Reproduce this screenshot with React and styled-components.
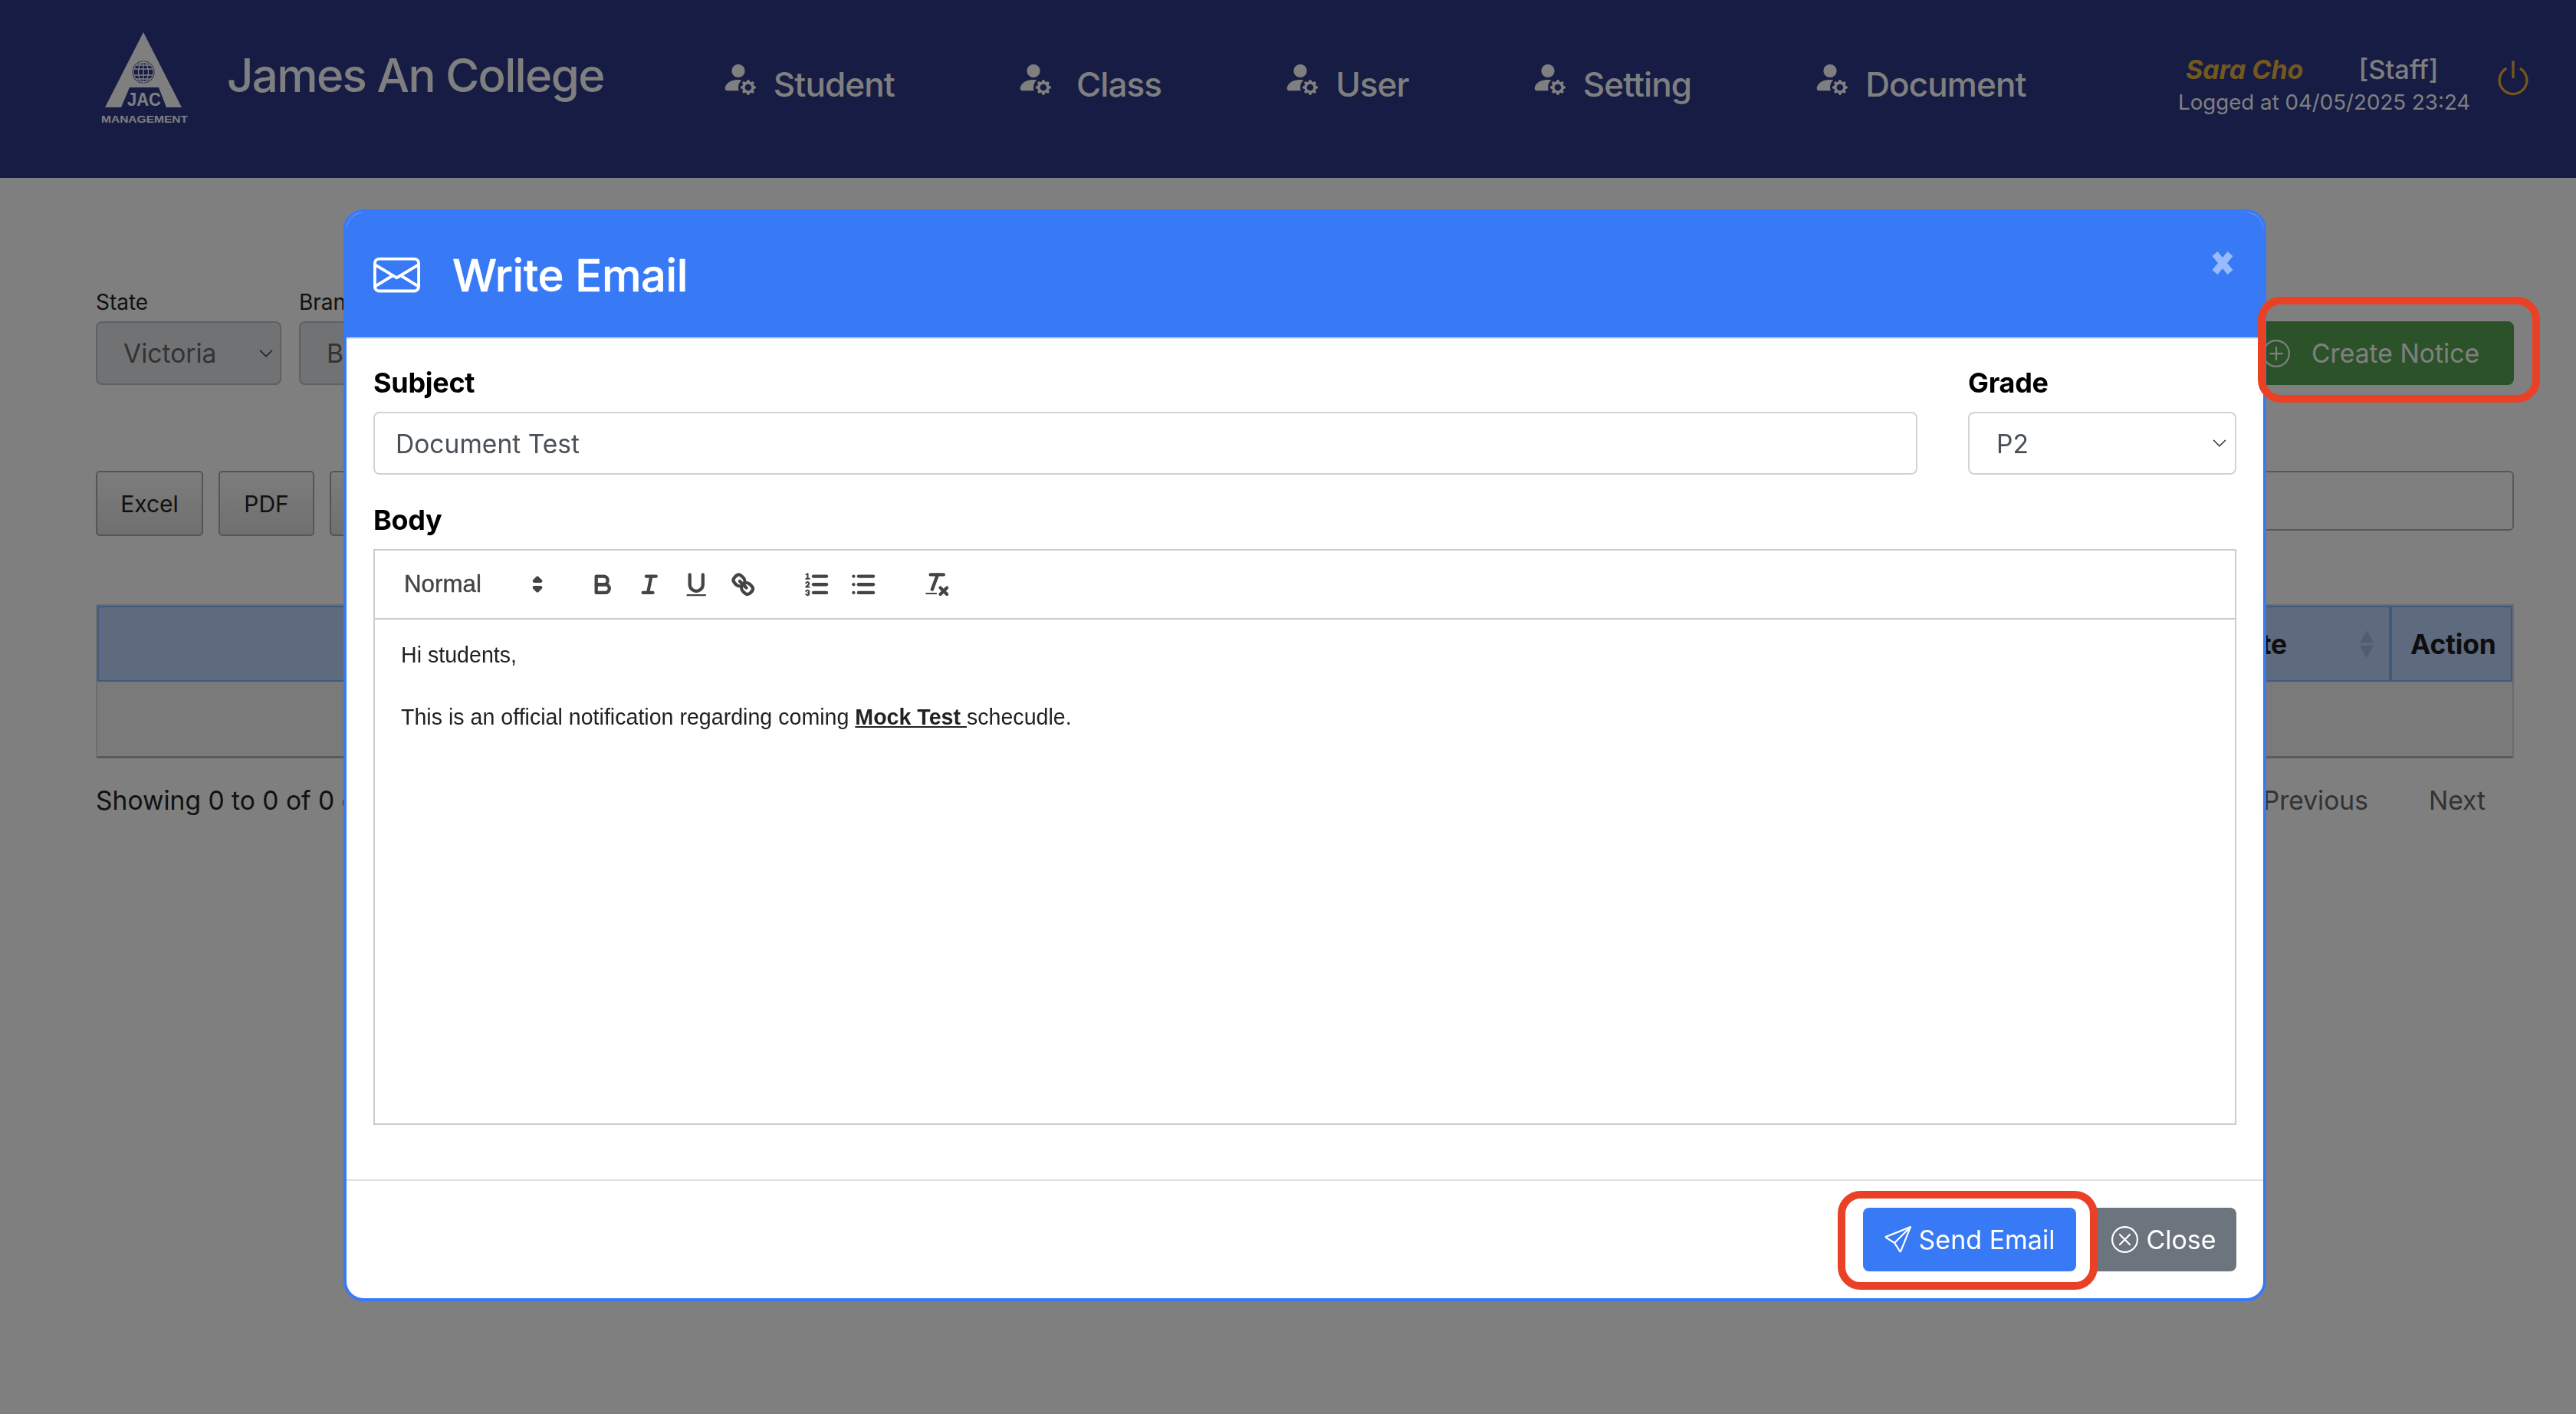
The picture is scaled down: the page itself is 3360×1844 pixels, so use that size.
import React from "react";
import styled, { createGlobalStyle } from "styled-components";
import { BsEnvelope, BsPersonFillGear, BsPower, BsPlusCircle, BsSend, BsXCircle } from "react-icons/bs";

const Global = createGlobalStyle`
  html, body { margin: 0; padding: 0; height: 1844px; overflow: hidden; background: #fff; }
  body { font-family: Inter, "Liberation Sans", sans-serif; color: #222; }
  * { box-sizing: border-box; }
`;

const TopBar = styled.header`
  height: 232px; background: #2c3889; color: #fff;
  display: flex; align-items: flex-start; padding-left: 130px; padding-right: 56px;
`;
const LogoMark = styled.svg`width: 122px; height: 128px; margin-top: 38px; flex: none;`;
const Brand = styled.div`
  font-size: 60px; line-height: 72px; font-weight: 500; letter-spacing: -1.65px;
  margin-left: 44px; margin-top: 62px; white-space: nowrap;
`;
const Nav = styled.nav`display: flex; gap: 158px; margin-left: 152px; margin-top: 80px;`;
const NavItem = styled.div`
  display: flex; align-items: flex-start; gap: ${p => p.$gap}px;
  font-size: 44px; line-height: 60px; font-weight: 500; letter-spacing: -.9px;
  svg { width: 46px; height: 46px; margin-top: -2px; }
`;
const UserBox = styled.div`margin-left: auto; margin-top: 69px; width: 380px; margin-right: 31px; flex: none;`;
const UserTop = styled.div`
  display: flex; gap: 72px; padding-left: 10px; font-size: 34.5px; line-height: 44px; font-weight: 500; white-space: nowrap;
`;
const UserName = styled.span`color: #e8b23c; font-weight: 700; font-style: italic; font-size: 34px;`;
const Logged = styled.div`font-size: 27.7px; line-height: 40px; white-space: nowrap;`;
const PowerBtn = styled(BsPower)`width: 52px; height: 52px; margin-top: 76px; color: #f0b030; flex: none;`;

const Content = styled.main`padding: 144px 81px 0 125px;`;
const FilterRow = styled.div`display: flex; align-items: flex-end; gap: 23px;`;
const Field = styled.div`width: ${p => p.$w}px; flex: none;`;
const FieldLabel = styled.div`font-size: 28px; line-height: 36px; margin-bottom: 7px; color: #222;`;
const FakeSelect = styled.div`
  height: 83px; border: 2px solid #bec0c4; border-radius: 8px; background: #e2e4e8;
  display: flex; align-items: center; justify-content: space-between;
  padding: 0 8px 0 34px; font-size: 33.6px; color: #666;
  svg { width: 20px; height: 20px; }
`;
const GreenBtn = styled.button`
  margin-left: auto; height: 83px; width: 364px; border: 0; border-radius: 8px; background: #58a452; color: #fff;
  display: flex; align-items: center; padding: 0 0 0 36px; gap: 28px;
  font: 400 33.7px Inter, sans-serif; white-space: nowrap;
  svg { width: 36px; height: 36px; flex: none; }
`;
const ToolRow = styled.div`display: flex; align-items: flex-start; gap: 20px; margin-top: 112px;`;
const ExportBtn = styled.button`
  height: 85px; width: ${p => p.$w}px; border: 2px solid #aaa; border-radius: 5px;
  background: linear-gradient(#fafafa, #e0e0e0); color: #222; font: 400 30px Inter, sans-serif; padding: 0;
`;
const SearchBox = styled.div`margin-left: auto; width: 700px; height: 78px; border: 2px solid #b0b0b0; border-radius: 6px;`;
const TableWrap = styled.div`
  margin-top: 89px; border: 2px solid #d8d8d8; border-bottom: 0;
`;
const HeadRow = styled.div`
  display: grid; grid-template-columns: 1fr 240px 159px; height: 99px;
  background: #bcd4fa; border: 2px solid #7eb4ff; border-left-width: 2px;
`;
const HeadCell = styled.div`
  display: flex; align-items: center; justify-content: space-between; padding: 2px 24px 0;
  font-size: 35.4px; font-weight: 700; color: #1c1c1c; letter-spacing: -.2px;
  & + & { border-left: ${p => (p.$sep ? "4px solid #7eb4ff" : "0")}; }
  svg { width: 18px; height: 38px; margin-right: -4px; margin-top: -2px; }
`;
const BodyRow = styled.div`
  height: 100px; background: #f5f5f5; border-bottom: 3px solid #b6b6b6;
`;
const Pager = styled.div`
  display: flex; justify-content: space-between; margin-top: 30px; font-size: 33.6px; line-height: 50px; color: #222;
`;
const PagerLinks = styled.div`display: flex; gap: 79px; color: #666; margin-right: 37px;`;

const Backdrop = styled.div`position: fixed; inset: 0; background: rgba(0,0,0,.5);`;
const Modal = styled.section`
  position: fixed; left: 448px; top: 273px; width: 2508px; height: 1424px;
  background: #fff; border: 4px solid #387af6; border-radius: 26px; overflow: hidden;
  display: flex; flex-direction: column;
`;
const ModalHead = styled.div`
  height: 163px; flex: none; background: #387af6; color: #fff;
  display: flex; align-items: center; gap: 42px; padding: 0 39px 0 35px;
  > svg:first-child { width: 61px; height: 61px; }
`;
const ModalTitle = styled.h2`margin: 0; font-size: 58px; font-weight: 500; letter-spacing: -.4px; line-height: 1; -webkit-text-stroke: .5px #fff;`;
const CloseX = styled.svg`width: 28px; height: 30px; margin-left: auto; align-self: flex-start; margin-top: 51px;`;
const ModalBody = styled.div`
  flex: 1; border-top: 2px solid #dee2e6; padding: 31px 35px 0 35px;
`;
const FormRow = styled.div`display: grid; grid-template-columns: 1fr 350px; gap: 66px;`;
const FormLabel = styled.div`font-size: 36px; line-height: 52px; font-weight: 700; color: #000; margin-bottom: 12px; letter-spacing: -.3px;`;
const FormInput = styled.div`
  height: 82px; border: 2px solid #ced4da; border-radius: 8px; display: flex; align-items: center; justify-content: space-between;
  padding: 0 10px 0 ${p => p.$pad}px; font-size: 33.6px; color: #495057;
  svg { width: 20px; height: 20px; }
`;
const BodyBlock = styled.div`margin-top: 33px;`;
const EditorBox = styled.div`height: 751px; border: 2px solid #ccc; display: flex; flex-direction: column;`;
const EditorBar = styled.div`
  height: 90px; flex: none; border-bottom: 2px solid #ccc; display: flex; align-items: center; padding-left: 38px;
`;
const PickerLabel = styled.div`
  width: 229px; flex: none; display: flex; align-items: center; justify-content: space-between; padding-right: 36px;
  font: 400 31.3px "Liberation Sans", sans-serif; color: #444; -webkit-text-stroke: .4px #444;
  svg { width: 38px; height: 38px; }
`;
const BtnGroup = styled.div`display: flex; margin-right: 35px;`;
const QlBtn = styled.div`
  width: 61px; height: 52px; display: flex; align-items: center; justify-content: center;
  svg { width: 38.5px; height: 38.5px; fill: none; stroke: #444; stroke-width: 2; stroke-linecap: round; stroke-linejoin: round; }
  .f { fill: #444; stroke: none; }
  .t { stroke-width: 1; }
`;
const EditorText = styled.div`
  padding: 26px 34px; font: 400 28.6px/40.5px "Liberation Sans", sans-serif; color: #222;
  p { margin: 0; }
  strong u { font-weight: 700; }
`;
const ModalFoot = styled.div`
  flex: none; height: 155px; border-top: 2px solid #dee2e6;
  display: flex; justify-content: flex-end; align-items: flex-start; gap: 20px; padding: 35px 35px 0 0;
`;
const ActionBtn = styled.button`
  height: 83px; width: ${p => p.$w}px; border: 0; border-radius: 8px; background: ${p => p.$bg}; color: #fff;
  display: flex; align-items: center; justify-content: center; gap: 10px;
  font: 400 34px Inter, sans-serif; padding: 0;
  svg { width: 35px; height: 35px; flex: none; }
`;
const Callout = styled.div`
  position: fixed; left: ${p => p.$x}px; top: ${p => p.$y}px; width: ${p => p.$w}px; height: ${p => p.$h}px;
  border: 10px solid #ea4126; border-radius: 30px; pointer-events: none;
`;

const Chevron = () => (
  <svg viewBox="0 0 16 16" fill="none" stroke="#343a40" strokeWidth="1.3" strokeLinecap="round" strokeLinejoin="round">
    <path d="M2 5l6 6 6-6" />
  </svg>
);

const Logo = () => (
  <LogoMark viewBox="0 0 122 128">
    <path fill="#fff" fillRule="evenodd" d="M57 4 107 102H87L77 76H39L28 102H7Z" />
    <circle cx="57" cy="56" r="14.5" fill="#2c3889" />
    <g fill="none" stroke="#fff" strokeWidth="1.3">
      <circle cx="57" cy="56" r="13" />
      <ellipse cx="57" cy="56" rx="6.5" ry="13" />
      <path d="M57 43v26M44.5 52h25M44.5 60h25M47 47h20M47 65h20" />
    </g>
    <text x="58" y="100" textAnchor="middle" fill="#fff" fontFamily="Liberation Sans" fontWeight="700" fontSize="24" textLength="44" lengthAdjust="spacingAndGlyphs">JAC</text>
    <text x="2" y="122" fill="#fff" fontFamily="Liberation Sans" fontWeight="700" fontSize="13.5" textLength="113" lengthAdjust="spacingAndGlyphs">MANAGEMENT</text>
  </LogoMark>
);

const NAV = [
  { label: "Student", gap: 23 },
  { label: "Class", gap: 33 },
  { label: "User", gap: 23 },
  { label: "Setting", gap: 23 },
  { label: "Document", gap: 23 },
];

export default function App() {
  return (
    <>
      <Global />
      <TopBar>
        <Logo />
        <Brand>James An College</Brand>
        <Nav>
          {NAV.map(n => (
            <NavItem key={n.label} $gap={n.gap}><BsPersonFillGear />{n.label}</NavItem>
          ))}
        </Nav>
        <UserBox>
          <UserTop><UserName>Sara Cho</UserName><span>[Staff]</span></UserTop>
          <Logged>Logged at 04/05/2025 23:24</Logged>
        </UserBox>
        <PowerBtn />
      </TopBar>

      <Content>
        <FilterRow>
          <Field $w={242}>
            <FieldLabel>State</FieldLabel>
            <FakeSelect>Victoria<Chevron /></FakeSelect>
          </Field>
          <Field $w={300}>
            <FieldLabel>Branch</FieldLabel>
            <FakeSelect>Box Hill<Chevron /></FakeSelect>
          </Field>
          <GreenBtn><BsPlusCircle />Create Notice</GreenBtn>
        </FilterRow>
        <ToolRow>
          <ExportBtn $w={140}>Excel</ExportBtn>
          <ExportBtn $w={125}>PDF</ExportBtn>
          <ExportBtn $w={125} aria-label="Print" />
          <SearchBox />
        </ToolRow>
        <TableWrap>
          <HeadRow>
            <HeadCell />
            <HeadCell>Date
              <svg viewBox="0 0 20 40"><path fill="#a3b9de" d="M10 0 20 18H0ZM10 40 0 22H20Z" /></svg>
            </HeadCell>
            <HeadCell $sep>Action</HeadCell>
          </HeadRow>
          <BodyRow />
        </TableWrap>
        <Pager>
          <span>Showing 0 to 0 of 0 entries</span>
          <PagerLinks><span>Previous</span><span>Next</span></PagerLinks>
        </Pager>
      </Content>

      <Backdrop />
      <Modal>
        <ModalHead>
          <BsEnvelope />
          <ModalTitle>Write Email</ModalTitle>
          <CloseX viewBox="0 0 28 30">
            <path d="M4 3 24 27M24 3 4 27" stroke="#98bcfb" strokeWidth="9" fill="none" />
          </CloseX>
        </ModalHead>
        <ModalBody>
          <FormRow>
            <div>
              <FormLabel>Subject</FormLabel>
              <FormInput $pad={27}>Document Test</FormInput>
            </div>
            <div>
              <FormLabel>Grade</FormLabel>
              <FormInput $pad={35}>P2<Chevron /></FormInput>
            </div>
          </FormRow>
          <BodyBlock>
            <FormLabel>Body</FormLabel>
            <EditorBox>
              <EditorBar>
                <PickerLabel>Normal
                  <svg viewBox="0 0 18 18" fill="#444" stroke="#444" strokeWidth="2" strokeLinejoin="round">
                    <polygon points="7 11 9 13 11 11 7 11" /><polygon points="7 7 9 5 11 7 7 7" />
                  </svg>
                </PickerLabel>
                <BtnGroup>
                  <QlBtn><svg viewBox="0 0 18 18"><path d="M5,4H9.5A2.5,2.5,0,0,1,12,6.5v0A2.5,2.5,0,0,1,9.5,9H5A0,0,0,0,1,5,9V4A0,0,0,0,1,5,4Z" /><path d="M5,9h5.5A2.5,2.5,0,0,1,13,11.5v0A2.5,2.5,0,0,1,10.5,14H5a0,0,0,0,1,0,0V9A0,0,0,0,1,5,9Z" /></svg></QlBtn>
                  <QlBtn><svg viewBox="0 0 18 18"><line x1="7" x2="13" y1="4" y2="4" /><line x1="5" x2="11" y1="14" y2="14" /><line x1="8" x2="10" y1="14" y2="4" /></svg></QlBtn>
                  <QlBtn><svg viewBox="0 0 18 18"><path d="M5,3V9a4.012,4.012,0,0,0,4,4H9a4.012,4.012,0,0,0,4-4V3" /><rect className="f" height="1" rx=".5" ry=".5" width="12" x="3" y="15" /></svg></QlBtn>
                  <QlBtn><svg viewBox="0 0 18 18"><line x1="7" x2="11" y1="7" y2="11" /><path d="M8.9,4.577a3.476,3.476,0,0,1,.36,4.679A3.476,3.476,0,0,1,4.577,8.9C3.185,7.5,2.035,6.4,4.217,4.217S7.5,3.185,8.9,4.577Z" /><path d="M13.423,9.1a3.476,3.476,0,0,0-4.679-.36,3.476,3.476,0,0,0,.36,4.679c1.392,1.392,2.5,2.542,4.679.36S14.815,10.5,13.423,9.1Z" /></svg></QlBtn>
                </BtnGroup>
                <BtnGroup>
                  <QlBtn><svg viewBox="0 0 18 18"><line x1="7" x2="15" y1="4" y2="4" /><line x1="7" x2="15" y1="9" y2="9" /><line x1="7" x2="15" y1="14" y2="14" /><line className="t" x1="2.5" x2="4.5" y1="5.5" y2="5.5" /><path className="f" d="M3.5,6A0.5,0.5,0,0,1,3,5.5V3.085l-0.276.138A0.5,0.5,0,0,1,2.053,3c-0.124-.247-0.023-0.324.224-0.447l1-.5A0.5,0.5,0,0,1,4,2.5v3A0.5,0.5,0,0,1,3.5,6Z" /><path className="t" d="M4.5,10.5h-2c0-.234,1.85-1.076,1.85-2.234A0.959,0.959,0,0,0,2.5,8.156" /><path className="t" d="M2.5,14.846a0.959,0.959,0,0,0,1.85-.109A0.7,0.7,0,0,0,3.75,14a0.688,0.688,0,0,0,.6-0.736,0.959,0.959,0,0,0-1.85-.109" /></svg></QlBtn>
                  <QlBtn><svg viewBox="0 0 18 18"><line x1="6" x2="15" y1="4" y2="4" /><line x1="6" x2="15" y1="9" y2="9" /><line x1="6" x2="15" y1="14" y2="14" /><line x1="3" x2="3" y1="4" y2="4" /><line x1="3" x2="3" y1="9" y2="9" /><line x1="3" x2="3" y1="14" y2="14" /></svg></QlBtn>
                </BtnGroup>
                <BtnGroup>
                  <QlBtn><svg viewBox="0 0 18 18"><line x1="5" x2="13" y1="3" y2="3" /><line x1="6" x2="9.35" y1="12" y2="3" /><line x1="11" x2="15" y1="11" y2="15" /><line x1="15" x2="11" y1="11" y2="15" /><rect className="f" height="1" rx=".5" ry=".5" width="7" x="2" y="14" /></svg></QlBtn>
                </BtnGroup>
              </EditorBar>
              <EditorText>
                <p>Hi students,</p>
                <p><br /></p>
                <p>This is an official notification regarding coming <strong><u>Mock Test </u></strong>schecudle.</p>
              </EditorText>
            </EditorBox>
          </BodyBlock>
        </ModalBody>
        <ModalFoot>
          <ActionBtn $w={278} $bg="#387af6"><BsSend />Send Email</ActionBtn>
          <ActionBtn $w={189} $bg="#6c757d"><BsXCircle />Close</ActionBtn>
        </ModalFoot>
      </Modal>
      <Callout $x={2945} $y={387} $w={368} $h={138} />
      <Callout $x={2397} $y={1553} $w={339} $h={129} />
    </>
  );
}
